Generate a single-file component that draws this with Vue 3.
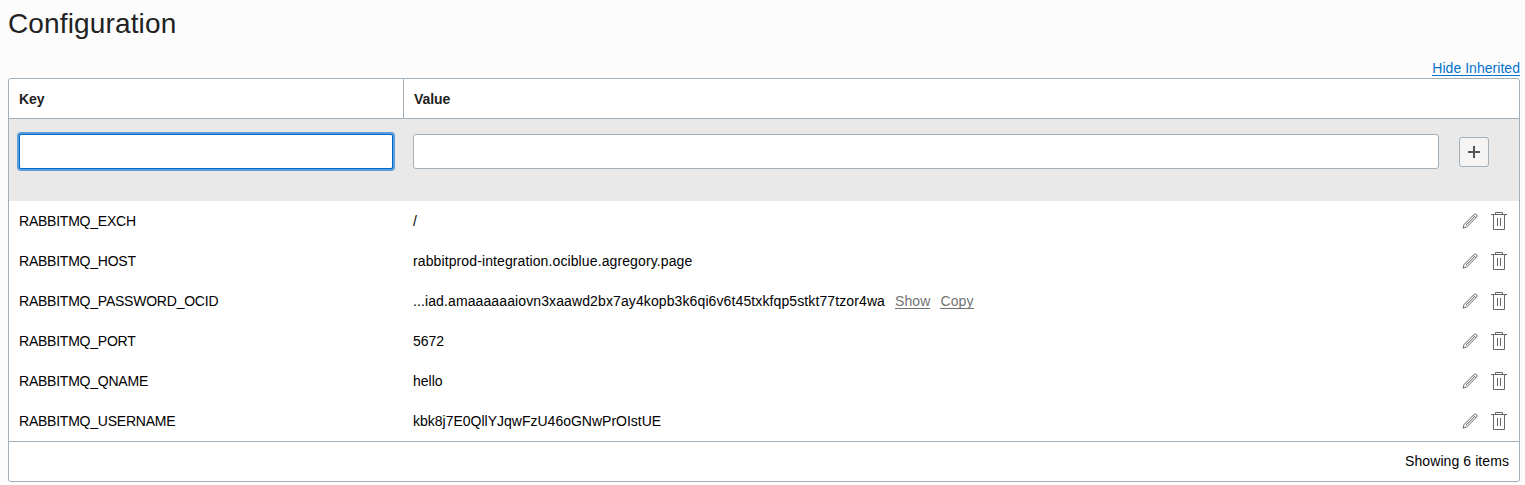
<script setup>
const rows = [
  { key: 'RABBITMQ_EXCH', value: '/' },
  { key: 'RABBITMQ_HOST', value: 'rabbitprod-integration.ociblue.agregory.page', long: true },
  { key: 'RABBITMQ_PASSWORD_OCID', value: '...iad.amaaaaaaiovn3xaawd2bx7ay4kopb3k6qi6v6t45txkfqp5stkt77tzor4wa', secret: true, long: true },
  { key: 'RABBITMQ_PORT', value: '5672' },
  { key: 'RABBITMQ_QNAME', value: 'hello' },
  { key: 'RABBITMQ_USERNAME', value: 'kbk8j7E0QllYJqwFzU46oGNwPrOIstUE' },
]
</script>

<template>
  <main class="page">
    <h1>Configuration</h1>
    <div class="toolbar"><a class="link">Hide Inherited</a></div>
    <section class="table">
      <div class="row head">
        <div class="key">Key</div>
        <div class="value">Value</div>
      </div>
      <div class="row editor">
        <div class="key"><input class="focused" type="text" aria-label="Key" /></div>
        <div class="value"><input type="text" aria-label="Value" /></div>
        <button class="add" aria-label="Add">
          <svg width="12" height="12" viewBox="0 0 12 12"><path d="M6 0V12M0 6H12" /></svg>
        </button>
      </div>
      <div v-for="row in rows" :key="row.key" class="row item">
        <div class="key">{{ row.key }}</div>
        <div class="value">
          <span :class="{ long: row.long }">{{ row.value }}</span>
          <template v-if="row.secret"><a class="action">Show</a><a class="action">Copy</a></template>
        </div>
        <div class="icons">
          <svg class="pencil" width="16" height="16" viewBox="0 0 16 16">
            <path d="M1 15.2 2.1 11.5 12.1 1.5Q13.3.5 14.5 1.6 15.6 2.8 14.6 4L4.7 13.9ZM11.2 2.4 13.7 4.9M12.3 3.9 3.9 12.2" />
          </svg>
          <svg class="trash" width="16" height="19" viewBox="0 0 16 19">
            <path d="M0 3.5H16M4.5 3.5V1.5H11.5V3.5M2.5 3.5V18.5H13.5V3.5M6.5 7V15M9.5 7V15" />
          </svg>
        </div>
      </div>
      <div class="foot"><span>Showing 6 items</span></div>
    </section>
  </main>
</template>

<style>
body { margin: 0; background: #fcfcfc; }
</style>

<style scoped>
.page {
  box-sizing: border-box;
  height: 485px;
  padding: 0 5px 0 8px;
  overflow: hidden;
  font: 14px/20px "Liberation Sans", Arial, sans-serif;
  color: #000;
}
h1 {
  margin: 0;
  height: 58px;
  font-size: 28px;
  line-height: 48px;
  font-weight: 400;
  letter-spacing: 0.14px;
  color: #222;
}
.toolbar {
  display: flex;
  justify-content: flex-end;
  height: 20px;
}
.link {
  height: 17px;
  line-height: 21px;
  letter-spacing: 0.04px;
  border-bottom: 1px solid #0572ce;
  color: #0572ce;
}
.table {
  box-sizing: border-box;
  width: 1512px;
  height: 404px;
  border: 1px solid #a3afb9;
  border-radius: 3px;
  background: #fff;
}
.row { display: flex; }
.key {
  box-sizing: border-box;
  flex: 0 0 394px;
  padding-left: 10px;
}
.value {
  display: flex;
  flex: 1;
  padding-left: 10px;
}
.head {
  height: 39px;
  border-bottom: 1px solid #a3afb9;
  line-height: 40px;
  font-weight: 700;
  letter-spacing: -0.1px;
  color: #222;
}
.head .value { border-left: 1px solid #a3afb9; }
.editor {
  box-sizing: border-box;
  height: 82px;
  padding-top: 15px;
  background: #e9e9e9;
}
input {
  box-sizing: border-box;
  width: 1026px;
  height: 35px;
  margin: 0;
  padding: 0 8px;
  border: 1px solid #a3afb9;
  border-radius: 3px;
  background: #fff;
  outline: none;
}
.focused {
  width: 374px;
  border-color: #0068c8;
  border-radius: 2px;
  box-shadow: 0 0 0 2px #5c9ddb;
}
.add {
  box-sizing: border-box;
  display: flex;
  align-items: center;
  justify-content: center;
  width: 30px;
  height: 30px;
  margin: 3px 30px 0 0;
  padding: 0;
  border: 1px solid #a3afb9;
  border-radius: 3px;
  background: #f4f4f4;
}
svg {
  display: block;
  fill: none;
  stroke: #666;
}
.add svg { stroke: #555; stroke-width: 2; }
.item {
  height: 40px;
  line-height: 40px;
}
.item .key { letter-spacing: -0.23px; }
.long { letter-spacing: 0.11px; }
.action {
  height: 16px;
  margin: 11px 0 0 10px;
  border-bottom: 1px solid #737373;
  line-height: 18px;
  letter-spacing: 0.1px;
  color: #737373;
}
.icons {
  display: flex;
  gap: 13px;
  padding-right: 12px;
}
.pencil { margin-top: 12px; }
.trash { margin-top: 10px; }
.foot {
  height: 39px;
  padding-right: 10px;
  border-top: 1px solid #a3afb9;
  line-height: 39px;
  letter-spacing: 0.08px;
  text-align: right;
}
</style>
